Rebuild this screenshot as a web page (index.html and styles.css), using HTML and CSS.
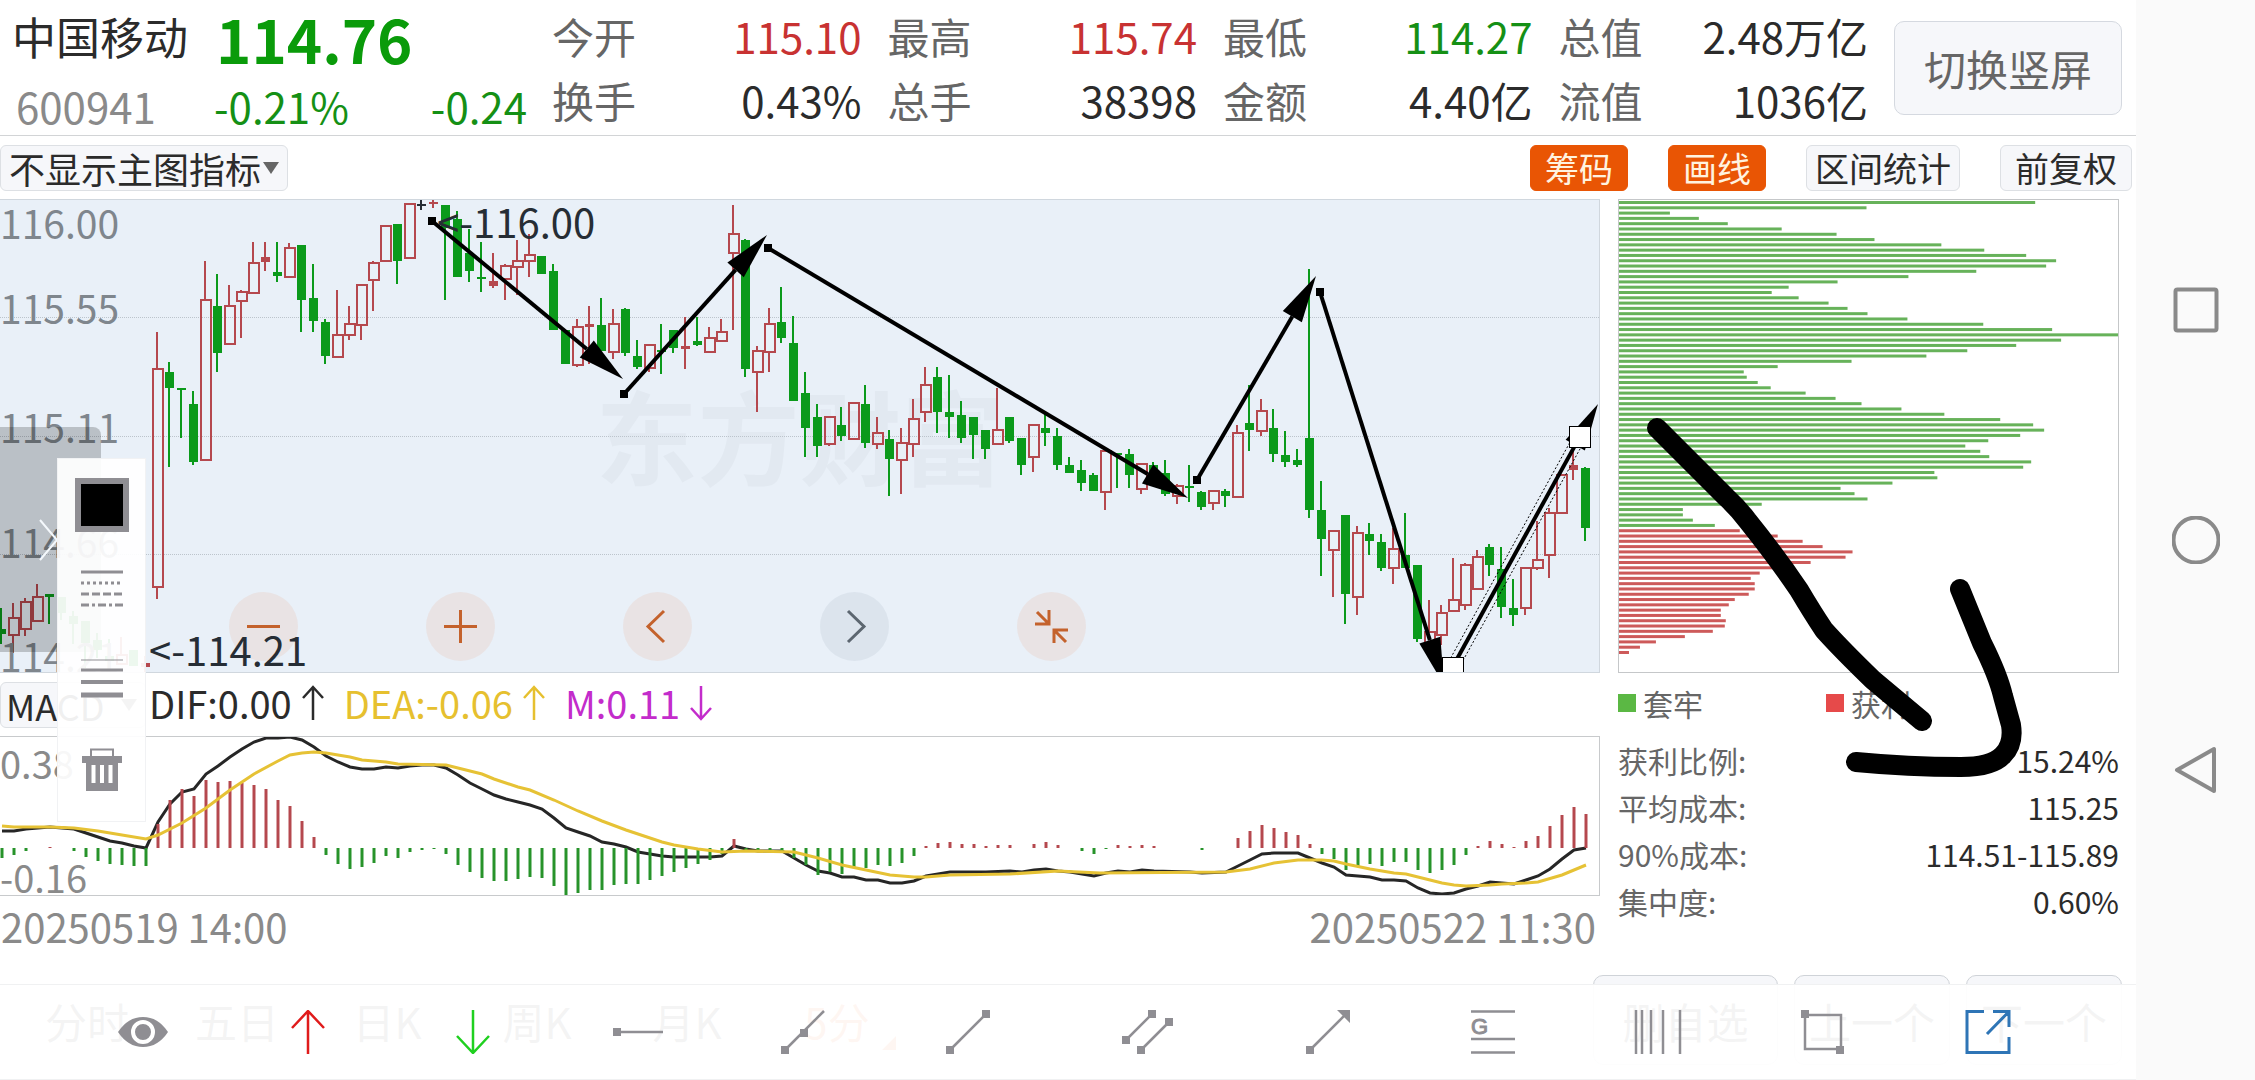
FILE: index.html
```
<!DOCTYPE html>
<html lang="zh-CN">
<head>
  <meta charset="UTF-8">
  <meta name="viewport" content="width=device-width, initial-scale=1.0">
  <title>中国移动 600941</title>
  <link rel="stylesheet" href="styles.css">
</head>
<body>
  <main class="app">
    <!-- Quote header -->
    <header class="quote">
      <div class="stock">
        <div class="stock-row">
          <h1 class="stock-name">中国移动</h1>
          <span class="price">114.76</span>
        </div>
        <div class="stock-row second">
          <span class="code">600941</span>
          <span class="change">-0.21%</span>
          <span class="change diff">-0.24</span>
        </div>
      </div>
      <dl class="stats">
        <div class="stat"><dt>今开</dt><dd class="up">115.10</dd></div>
        <div class="stat"><dt>最高</dt><dd class="up">115.74</dd></div>
        <div class="stat"><dt>最低</dt><dd class="down">114.27</dd></div>
        <div class="stat"><dt>总值</dt><dd>2.48万亿</dd></div>
        <div class="stat"><dt>换手</dt><dd>0.43%</dd></div>
        <div class="stat"><dt>总手</dt><dd>38398</dd></div>
        <div class="stat"><dt>金额</dt><dd>4.40亿</dd></div>
        <div class="stat"><dt>流值</dt><dd>1036亿</dd></div>
      </dl>
      <button class="rotate-btn" type="button">切换竖屏</button>
    </header>

    <!-- Indicator bar -->
    <div class="options">
      <div class="picker">
        <select class="picker-select main-select" aria-label="主图指标">
          <option>不显示主图指标</option>
        </select>
      </div>
      <div class="option-btns">
        <button class="option active" type="button">筹码</button>
        <button class="option active" type="button">画线</button>
        <button class="option" type="button">区间统计</button>
        <button class="option" type="button">前复权</button>
      </div>
    </div>

    <div class="content">
      <section class="charts">
        <div class="kline">
          <div class="watermark">东方财富</div>
          <svg class="plot" id="kline" viewBox="0 0 1599 472" preserveAspectRatio="none"></svg>
          <div class="axis">
            <div class="axis-cell"><span>116.00</span><span>115.55</span></div>
            <div class="axis-cell"><span>115.11</span></div>
            <div class="axis-cell"><span>114.66</span></div>
            <div class="axis-cell"><span>114.21</span></div>
          </div>
          <div class="zoom-btns">
            <button class="round" type="button" aria-label="缩小"><svg viewBox="0 0 69 69"><path d="M18 34.500H51"/></svg></button>
            <button class="round" type="button" aria-label="放大"><svg viewBox="0 0 69 69"><path d="M18 34.500H51M34.500 18V51"/></svg></button>
            <button class="round" type="button" aria-label="左移"><svg viewBox="0 0 69 69"><path d="M41 19L25 34.500L41 50"/></svg></button>
            <button class="round off" type="button" aria-label="右移"><svg viewBox="0 0 69 69"><path d="M28 19L44 34.500L28 50"/></svg></button>
            <button class="round" type="button" aria-label="收起"><svg viewBox="0 0 69 69"><path d="M20 20L31 31M18 32H32V18M49 50L38 39M51 38H37V51"/></svg></button>
          </div>
          <span class="mark mark-high">&lt;-116.00</span>
          <span class="mark mark-low">&lt;-114.21</span>
          <button class="drawer" type="button" aria-label="展开"><svg viewBox="0 0 20 42"><path d="M1 1L18 21L1 41"/></svg></button>
        </div>

        <div class="macd-head">
          <div class="picker">
            <select class="picker-select macd-select" aria-label="副图指标">
              <option>MACD</option>
            </select>
          </div>
          <span class="dif">DIF:0.00<svg class="trend" viewBox="0 0 22 36"><path d="M11 35V2M1 13L11 2L21 13"/></svg></span>
          <span class="dea">DEA:-0.06<svg class="trend" viewBox="0 0 22 36"><path d="M11 35V2M1 13L11 2L21 13"/></svg></span>
          <span class="m">M:0.11<svg class="trend" viewBox="0 0 22 36"><path d="M11 1V34M1 23L11 34L21 23"/></svg></span>
        </div>
        <div class="macd">
          <svg class="plot" id="macd" viewBox="0 0 1599 158" preserveAspectRatio="none"></svg>
          <div class="macd-axis"><span>0.38</span><span>-0.16</span></div>
        </div>
        <div class="dates"><span>20250519 14:00</span><span>20250522 11:30</span></div>

        <!-- Line style palette -->
        <div class="palette">
          <button class="swatch" type="button" aria-label="颜色"></button>
          <button class="tool dash" type="button" aria-label="线型">
            <svg viewBox="0 0 42 38"><path d="M0 2H42"/><path d="M0 13H42" stroke-dasharray="3 3"/><path d="M0 24H42" stroke-dasharray="8 3"/><path d="M0 35H42" stroke-dasharray="8 3 3 3"/></svg>
          </button>
          <button class="tool weight" type="button" aria-label="线宽">
            <svg viewBox="0 0 42 40"><path d="M0 2H42" stroke-width="1"/><path d="M0 12H42" stroke-width="3"/><path d="M0 24H42" stroke-width="4"/><path d="M0 37H42" stroke-width="5"/></svg>
          </button>
          <button class="tool trash" type="button" aria-label="删除">
            <svg viewBox="0 0 42 44"><path d="M10 8V1.500H32V8" fill="none" stroke-width="2"/><path d="M1 8H41V15H37V43H5V15H1Z" fill="#8f8e93" stroke="none"/><path d="M12.500 17V35M21 17V35M29.500 17V35" stroke="#fff" stroke-width="4"/></svg>
          </button>
        </div>
      </section>

      <aside class="chips">
        <div class="chip-box">
          <svg class="plot" id="chips" viewBox="0 0 500 472" preserveAspectRatio="none"></svg>
        </div>
        <div class="legend">
          <span class="trapped">套牢</span>
          <span class="profit">获利</span>
        </div>
        <dl class="chip-info">
          <div><dt>获利比例:</dt><dd>15.24%</dd></div>
          <div><dt>平均成本:</dt><dd>115.25</dd></div>
          <div><dt>90%成本:</dt><dd>114.51-115.89</dd></div>
          <div><dt>集中度:</dt><dd>0.60%</dd></div>
        </dl>
        <svg class="scribble" viewBox="0 0 500 600">
          <path d="M39 229L108 298Q120 309 129 321Q158 357 181 391Q194 413 206 431Q224 451 255 481L304 522"/>
          <path d="M342 390L364 444Q380 476 385 497L393 526Q396 545 385 556Q374 568 343 568Q290 568 238 563"/>
        </svg>
      </aside>
    </div>

    <!-- Period tabs -->
    <footer class="periods">
      <nav class="tabs">
        <button type="button">分时</button>
        <button type="button">五日</button>
        <button type="button">日K</button>
        <button type="button">周K</button>
        <button type="button">月K</button>
        <button class="current" type="button">5分</button>
      </nav>
      <div class="pager">
        <button class="pager-wide" type="button">删自选</button>
        <button type="button">上一个</button>
        <button type="button">下一个</button>
      </div>
    </footer>

    <!-- Drawing tools -->
    <div class="drawbar">
      <button type="button" aria-label="显示"><svg viewBox="0 0 50 44"><path d="M0 22Q10 7 25 7T50 22Q40 37 25 37T0 22Z" fill="#8f8e93" stroke="none"/><circle cx="25" cy="22" r="10" fill="#8f8e93" stroke="#fff" stroke-width="4"/></svg></button>
      <button type="button" aria-label="向上"><svg class="red" viewBox="0 0 50 44"><path d="M25 44V2M9 18L25 1L41 18"/></svg></button>
      <button type="button" aria-label="向下"><svg class="green" viewBox="0 0 50 44"><path d="M25 0V42M9 26L25 43L41 26"/></svg></button>
      <button type="button" aria-label="水平线"><svg viewBox="0 0 50 44"><path d="M0 22H50"/><path class="dot" d="M0 18h8v8h-8z"/></svg></button>
      <button type="button" aria-label="射线"><svg viewBox="0 0 50 44"><path d="M7 40L46 1"/><path class="dot" d="M3 36h8v8h-8zM22 19h8v8h-8z"/></svg></button>
      <button type="button" aria-label="线段"><svg viewBox="0 0 50 44"><path d="M7 40L43 4"/><path class="dot" d="M3 36h8v8h-8zM39 0h8v8h-8z"/></svg></button>
      <button class="wide" type="button" aria-label="平行线"><svg viewBox="0 0 52 44"><path d="M4 30L30 4M19 40L47 12"/><path class="dot" d="M0 26h8v8h-8zM26 0h8v8h-8zM15 36h8v8h-8zM43 8h8v8h-8z"/></svg></button>
      <button type="button" aria-label="箭头"><svg viewBox="0 0 50 44"><path d="M7 40L43 4"/><path class="dot" d="M3 36h8v8h-8zM34 0H47V13Z"/></svg></button>
      <button type="button" aria-label="黄金分割"><svg viewBox="0 0 50 44"><path d="M3 1.500H47M3 29H47M3 42.500H47"/><text x="3" y="24" class="golden">G</text></svg></button>
      <button type="button" aria-label="周期线"><svg viewBox="0 0 50 44"><path d="M3 0V44M9 0V44M18 0V44M30 0V44M47 0V44"/></svg></button>
      <button type="button" aria-label="矩形"><svg viewBox="0 0 50 44"><path d="M7 5H43V39H7Z"/><path class="dot" d="M3 0h8v8h-8zM38 36h8v8h-8z"/></svg></button>
      <button type="button" aria-label="退出画线"><svg class="blue" viewBox="0 0 50 44"><path d="M21 1.500H4V42.500H46V27M30 1.500H46V17M46 1.500L24 24"/></svg></button>
    </div>
  </main>

  <nav class="system-nav">
    <button type="button" aria-label="最近任务"><svg viewBox="0 0 48 48"><rect x="3.500" y="3.500" width="41" height="41" rx="2"/></svg></button>
    <button type="button" aria-label="主页"><svg viewBox="0 0 48 48"><circle cx="24" cy="24" r="22.500"/></svg></button>
    <button type="button" aria-label="返回"><svg viewBox="0 0 48 48"><path d="M5 24L42 3V45Z" stroke-linejoin="round"/></svg></button>
  </nav>

  <script src="chart.js"></script>
</body>
</html>
```

FILE: styles.css
```
* {
  margin: 0;
  padding: 0;
  box-sizing: border-box;
}

body {
  display: flex;
  min-height: 100vh;
  background-color: #fff;
  color: #2b2b2b;
  font-family: "Noto Sans CJK SC", "Noto Sans", sans-serif;
  font-size: 42px;
  overflow: hidden;
}

button,
select {
  font: inherit;
  color: inherit;
  border: none;
  background: none;
  cursor: pointer;
}

svg {
  display: block;
  fill: none;
}

.app {
  position: relative;
  flex: 1;
  min-width: 0;
  height: 100vh;
  overflow: hidden;
}

/* Quote header */
.quote {
  display: flex;
  align-items: center;
  height: 136px;
  padding-right: 14px;
  border-bottom: 1px solid #d2d4d6;
}

.stock {
  align-self: flex-start;
  width: 552px;
  padding: 4px 0 0 12px;
}

.stock-row {
  display: flex;
  align-items: center;
  height: 64px;
}

.stock-row.second {
  height: 74px;
}

.stock-name {
  font-size: 44px;
  font-weight: 400;
}

.price {
  margin-left: 28px;
  padding-top: 4px;
  font-size: 60px;
  font-weight: 700;
  line-height: 64px;
  color: #0a9b0a;
}

.code {
  width: 202px;
  padding-left: 4px;
  color: #8a8a8a;
}

.change {
  color: #159015;
}

.diff {
  margin-left: auto;
  margin-right: 25px;
}

.stats {
  display: grid;
  flex: 1;
  grid-template-columns: repeat(4, 1fr);
  column-gap: 26px;
}

.stat {
  display: flex;
  justify-content: space-between;
  line-height: 64px;
}

.stat dt {
  color: #666;
}

.up {
  color: #c83232;
}

.down {
  color: #159015;
}

.rotate-btn {
  width: 228px;
  height: 94px;
  margin-left: 26px;
  color: #666;
  background-color: #f6f7fa;
  border: 1px solid #d5d9e0;
  border-radius: 10px;
}

/* Indicator bar */
.options {
  display: flex;
  align-items: center;
  justify-content: space-between;
  height: 63px;
  padding-right: 4px;
}

.picker {
  position: relative;
}

.picker::after {
  content: "";
  position: absolute;
  top: 17px;
  right: 9px;
  border: 8px solid transparent;
  border-top: 12px solid #666;
  border-bottom: none;
  pointer-events: none;
}

.picker-select {
  display: block;
  height: 46px;
  padding-left: 8px;
  appearance: none;
  font-size: 36px;
  line-height: 44px;
  background-color: #f6f7fa;
  border: 1px solid #dde0e4;
  border-radius: 6px;
}

.main-select {
  width: 288px;
}

.macd-select {
  width: 146px;
  padding-left: 5px;
}

.option-btns {
  display: flex;
  gap: 40px;
}

.option {
  height: 46px;
  padding: 0 14px;
  font-size: 34px;
  line-height: 42px;
  background-color: #f6f7fa;
  border: 1px solid #dde0e4;
  border-radius: 6px;
}

.option:nth-child(3) {
  padding: 0 8px;
}

.option.active {
  color: #fff3e0;
  background-color: #e95504;
  border-color: #e95504;
}

/* Main area */
.content {
  display: flex;
  gap: 18px;
  padding-right: 17px;
}

.charts {
  position: relative;
  flex: 1;
  min-width: 0;
}

.kline {
  position: relative;
  height: 474px;
  background-color: #e9f0f8;
  border: 1px solid #d0d7de;
  border-left: none;
  overflow: hidden;
}

.plot {
  position: absolute;
  top: 0;
  left: 0;
  width: 100%;
  height: 100%;
}

.watermark {
  position: absolute;
  top: 174px;
  width: 100%;
  text-align: center;
  font-size: 102px;
  font-weight: 700;
  line-height: 120px;
  color: #e2e9f1;
}

.axis {
  position: absolute;
  top: 0;
  left: 0;
  display: flex;
  flex-direction: column;
  height: 100%;
  font-size: 39px;
  line-height: 26px;
  color: #7f868d;
}

.axis-cell {
  display: flex;
  flex: 1;
  flex-direction: column;
  justify-content: flex-end;
  padding-bottom: 4px;
}

.axis-cell:first-child {
  justify-content: space-between;
  padding: 9px 0;
}

.zoom-btns {
  position: absolute;
  top: 392px;
  left: 229px;
  display: flex;
  gap: 128px;
}

.round {
  width: 69px;
  height: 69px;
  border-radius: 50%;
  background-color: rgba(233, 120, 60, 0.1);
}

.round svg {
  stroke: #c4622c;
  stroke-width: 3;
}

.round.off {
  background-color: rgba(90, 110, 130, 0.09);
}

.round.off svg {
  stroke: #5c6670;
}

.mark {
  position: absolute;
  font-size: 40px;
  line-height: 40px;
  color: #262d35;
}

.mark-high {
  top: 1px;
  left: 437px;
}

.mark-low {
  top: 429px;
  left: 149px;
}

.drawer {
  position: absolute;
  top: 227px;
  left: 0;
  width: 101px;
  height: 225px;
  padding-left: 39px;
  background-color: rgba(0, 0, 0, 0.2);
  border-radius: 0 8px 8px 0;
}

.drawer svg {
  width: 20px;
  height: 42px;
  stroke: #f4f8fc;
  stroke-width: 2;
}

/* MACD */
.macd-head {
  display: flex;
  align-items: center;
  gap: 20px;
  height: 63px;
  font-size: 38px;
  line-height: 44px;
}

.macd-head .picker {
  margin-right: -17px;
}

.macd-head span {
  display: flex;
  align-items: center;
  gap: 10px;
  padding-bottom: 4px;
}

.trend {
  width: 22px;
  height: 36px;
  stroke: currentColor;
  stroke-width: 2.5;
}

.dea {
  color: #e6c02f;
}

.m {
  color: #c32ccb;
}

.macd {
  position: relative;
  height: 160px;
  border: 1px solid #c8cacc;
  border-left: none;
}

.macd-axis {
  position: absolute;
  display: flex;
  flex-direction: column;
  justify-content: space-between;
  height: 100%;
  padding-top: 8px;
  font-size: 38px;
  line-height: 36px;
  color: #8a8a8a;
}

.dates {
  display: flex;
  justify-content: space-between;
  padding: 6px 4px 0 1px;
  font-size: 40px;
  line-height: 48px;
  color: #8a8a8a;
}

.palette {
  position: absolute;
  top: 259px;
  left: 57px;
  display: flex;
  flex-direction: column;
  align-items: center;
  width: 89px;
  height: 364px;
  padding-top: 19px;
  background-color: rgba(255, 255, 255, 0.93);
  border: 1px solid #f1f2f4;
}

.swatch {
  width: 54px;
  height: 54px;
  background-color: #000;
  border: 6px solid #8f8e93;
}

.tool svg {
  width: 42px;
  stroke: #8f8e93;
  stroke-width: 3;
}

.dash {
  margin-top: 38px;
}

.weight {
  margin-top: 50px;
}

.trash {
  margin-top: 50px;
}

/* Chip distribution */
.chips {
  position: relative;
  width: 501px;
}

.chip-box {
  position: relative;
  height: 474px;
  border: 1px solid #c5c7c9;
}

.legend {
  display: flex;
  height: 59px;
  font-size: 30px;
  line-height: 58px;
  color: #666;
}

.legend span {
  display: flex;
  align-items: center;
  gap: 7px;
  width: 208px;
}

.legend span::before {
  content: "";
  width: 18px;
  height: 18px;
  background-color: #5bb844;
}

.legend .profit::before {
  background-color: #e64a4a;
}

.chip-info {
  padding-top: 5px;
  font-size: 30px;
  line-height: 47px;
}

.chip-info div {
  display: flex;
  justify-content: space-between;
}

.chip-info dt {
  color: #666;
}

.scribble {
  position: absolute;
  top: 0;
  left: 0;
  width: 500px;
  height: 600px;
  stroke: #000;
  stroke-width: 20;
  stroke-linecap: round;
  stroke-linejoin: round;
}

/* Period tabs */
.periods {
  position: absolute;
  right: 14px;
  bottom: 15px;
  left: 42px;
  display: flex;
  justify-content: space-between;
}

.tabs {
  display: flex;
  gap: 60px;
}

.tabs button {
  position: relative;
  width: 90px;
}

.tabs .current {
  color: #e95504;
}

.tabs .current::after {
  content: "";
  position: absolute;
  right: -14px;
  bottom: 15px;
  border-left: 14px solid transparent;
  border-bottom: 14px solid #e95504;
}

.pager {
  display: flex;
  gap: 16px;
}

.pager button {
  width: 156px;
  height: 90px;
  background-color: #f6f7fa;
  border: 1px solid #cfd3d8;
  border-radius: 10px;
}

.pager .pager-wide {
  width: 185px;
}

/* Drawing tools */
.drawbar {
  position: absolute;
  right: 0;
  bottom: 0;
  left: 0;
  display: flex;
  gap: 115px;
  height: 96px;
  padding-left: 118px;
  align-items: center;
  background-color: rgba(255, 255, 255, 0.95);
  border-top: 1px solid #f0f1f2;
  border-bottom: 1px solid #f0f1f2;
}

.drawbar button {
  display: flex;
  justify-content: center;
  width: 50px;
}

.drawbar .wide {
  width: 80px;
}

.drawbar svg {
  height: 44px;
  stroke: #8f8e93;
  stroke-width: 2.5;
}

.drawbar .dot {
  fill: #8f8e93;
  stroke: none;
}

.drawbar .red {
  stroke: #e01b1b;
}

.drawbar .green {
  stroke: #1fd01f;
}

.drawbar .blue {
  stroke: #2e75b6;
  stroke-width: 3;
}

.golden {
  font-family: "Liberation Sans", sans-serif;
  font-size: 22px;
  fill: #8f8e93;
  stroke: #8f8e93;
  stroke-width: 1;
}

/* System navigation */
.system-nav {
  display: flex;
  flex-direction: column;
  align-items: center;
  justify-content: center;
  gap: 182px;
  width: 119px;
  background-color: #fafafa;
}

.system-nav svg {
  width: 48px;
  height: 48px;
  stroke: #8a8a8a;
  stroke-width: 4;
}
```

FILE: chart.js
```
const RED = '#b5484e';
const GREEN = '#0b9a1b';
const STEP = 12;

// color, high, body top, body bottom, low
const candles = [
  ['g', 408, 429, 434, 444], ['r', 403, 418, 435, 453], ['r', 398, 402, 429, 436], ['r', 384, 397, 421, 421],
  ['g', 394, 394, 397, 424], ['g', 397, 397, 413, 420], ['g', 411, 416, 424, 444], ['g', 421, 421, 443, 468],
  ['g', 433, 440, 450, 458], ['g', 439, 456, 461, 468], ['r', 437, 455, 464, 464], ['g', 450, 450, 466, 466],
  ['r', 456, 463, 467, 473], ['r', 132, 169, 387, 399], ['g', 162, 172, 188, 267], ['g', 188, 188, 190, 238],
  ['g', 191, 204, 262, 265], ['r', 61, 100, 260, 260], ['g', 74, 106, 153, 172], ['r', 85, 106, 144, 145],
  ['r', 90, 92, 101, 138], ['r', 42, 63, 93, 93], ['r', 42, 57, 62, 71], ['g', 42, 72, 76, 82],
  ['r', 43, 48, 77, 77], ['g', 45, 45, 100, 132], ['g', 64, 98, 121, 132], ['g', 119, 122, 156, 164],
  ['r', 90, 135, 157, 158], ['r', 106, 124, 135, 140], ['r', 84, 85, 125, 140], ['r', 61, 63, 80, 111],
  ['r', 26, 26, 61, 61], ['g', 24, 24, 61, 84], ['r', 3, 4, 58, 58], ['k', 0, 4, 6, 10],
  ['r', 0, 2, 4, 8], ['g', 5, 5, 28, 100], ['g', 11, 19, 77, 77], ['g', 29, 53, 71, 82],
  ['g', 42, 77, 79, 92], ['r', 53, 81, 86, 88], ['r', 64, 66, 79, 100], ['r', 40, 61, 67, 95],
  ['r', 34, 55, 61, 77], ['g', 56, 56, 74, 74], ['g', 64, 71, 130, 130], ['g', 130, 130, 164, 164],
  ['r', 119, 127, 165, 167], ['r', 106, 124, 127, 164], ['g', 98, 125, 151, 151], ['r', 109, 124, 152, 159],
  ['g', 108, 109, 153, 156], ['g', 140, 156, 167, 169], ['r', 144, 145, 168, 172], ['g', 124, 150, 152, 174],
  ['g', 130, 130, 148, 153], ['r', 117, 146, 149, 169], ['g', 117, 141, 145, 146], ['r', 127, 138, 152, 152],
  ['r', 119, 132, 141, 141], ['r', 5, 34, 53, 130], ['g', 39, 40, 169, 177], ['r', 146, 151, 172, 212],
  ['r', 108, 124, 152, 172], ['g', 87, 122, 138, 143], ['g', 116, 143, 201, 201], ['g', 172, 193, 228, 257],
  ['g', 204, 217, 246, 257], ['r', 216, 217, 244, 246], ['g', 207, 225, 236, 241], ['r', 203, 203, 239, 240],
  ['g', 185, 204, 243, 248], ['r', 217, 233, 244, 249], ['g', 230, 239, 259, 296], ['r', 228, 243, 260, 294],
  ['r', 199, 219, 244, 257], ['r', 167, 185, 212, 222], ['g', 167, 177, 212, 233], ['g', 175, 212, 217, 238],
  ['g', 201, 215, 238, 243], ['g', 217, 217, 235, 259], ['g', 230, 230, 249, 259], ['r', 188, 230, 244, 244],
  ['g', 217, 217, 241, 243], ['g', 238, 238, 265, 275], ['r', 224, 225, 257, 272], ['g', 214, 228, 233, 246],
  ['g', 228, 236, 265, 270], ['g', 257, 265, 273, 273], ['g', 260, 270, 283, 291], ['g', 273, 275, 291, 291],
  ['r', 251, 251, 292, 310], ['g', 253, 253, 255, 288], ['g', 249, 254, 275, 288], ['r', 264, 264, 289, 294],
  ['g', 262, 265, 275, 275], ['g', 260, 273, 294, 296], ['r', 284, 286, 296, 304], ['g', 265, 286, 288, 302],
  ['g', 291, 292, 307, 310], ['r', 290, 291, 303, 310], ['g', 289, 291, 296, 307], ['r', 225, 233, 297, 297],
  ['g', 185, 223, 230, 251], ['r', 199, 211, 231, 236], ['g', 209, 228, 254, 262], ['g', 231, 255, 262, 267],
  ['g', 249, 260, 265, 267], ['g', 69, 238, 310, 318], ['g', 281, 310, 339, 376], ['r', 330, 331, 350, 397],
  ['g', 315, 315, 394, 424], ['r', 326, 333, 397, 415], ['g', 323, 334, 341, 355], ['g', 334, 342, 368, 371],
  ['r', 328, 349, 368, 384], ['g', 313, 355, 368, 368], ['g', 365, 365, 439, 442], ['r', 400, 432, 446, 448],
  ['r', 405, 413, 435, 445], ['r', 358, 400, 411, 411], ['r', 363, 365, 405, 410], ['r', 350, 357, 389, 389],
  ['g', 344, 347, 365, 376], ['g', 347, 369, 407, 418], ['g', 379, 408, 415, 426], ['r', 367, 368, 408, 415],
  ['r', 321, 360, 368, 370], ['r', 308, 313, 355, 378], ['r', 274, 275, 313, 313], ['r', 251, 265, 270, 280],
  ['g', 267, 268, 328, 341]
];

// Trend lines drawn by the user: x1, y1, x2, y2
const arrows = [
  [432, 21, 623, 179], [624, 194, 767, 35], [768, 48, 1188, 298],
  [1197, 280, 1316, 76], [1320, 92, 1444, 485], [1452, 468, 1598, 204]
];

const bars = [
  -10, -7, -3, 0, 1, 0, -3, -9, -13, -16, -17, -18, -18, 24, 48, 59, 52, 68, 66, 67, 65, 63, 59, 48, 42, 27, 11,
  -7, -16, -21, -19, -15, -8, -10, -4, -2, -1, -6, -17, -24, -30, -33, -33, -31, -29, -30, -38, -47, -45, -42,
  -42, -37, -36, -36, -32, -28, -24, -20, -16, -12, -6, 9, -2, -3, -2, -5, -10, -17, -27, -24, -26, -20, -20,
  -17, -18, -15, -8, 2, 5, 6, 4, 4, 2, 3, 3, 0, 4, 6, 3, 0, -3, -6, -1, 3, 2, 3, 2, 0, 0, 0, -2, 0, 0, 10, 17,
  23, 20, 16, 13, 4, -6, -11, -22, -19, -16, -18, -14, -14, -22, -25, -22, -17, -7, 2, 7, 4, 1, 7, 12, 22, 33, 41, 34
];

const dif = '2,94 14,94 26,92 50,90 74,92 86,96 98,100 110,104 122,106 134,109 146,111 158,85 170,67 182,55 194,52 206,37 218,29 230,20 242,12 254,5 266,1 278,1 290,0 302,3 314,10 326,19 338,25 350,30 362,32 374,32 386,30 398,31 410,29 422,28 434,28 446,31 458,38 470,46 482,52 494,58 506,62 518,65 530,68 542,72 554,81 566,91 578,95 590,99 602,105 614,107 626,110 638,115 650,117 662,119 674,120 710,120 722,119 734,109 746,112 758,114 782,114 794,121 806,128 818,134 830,136 842,140 854,140 866,143 878,143 890,146 902,146 914,144 926,139 938,137 950,135 986,135 1010,134 1022,135 1034,133 1046,132 1058,134 1070,135 1082,137 1094,139 1106,136 1118,134 1130,135 1142,133 1154,134 1190,135 1202,136 1226,135 1238,129 1250,123 1262,117 1274,116 1298,116 1310,121 1322,126 1334,130 1346,138 1358,139 1370,140 1382,143 1394,143 1406,144 1418,151 1430,156 1442,157 1454,156 1466,152 1478,149 1490,145 1514,147 1526,143 1538,139 1550,132 1562,122 1574,113 1586,111';
const dea = '2,89 14,90 50,90 74,91 98,94 122,98 146,102 158,98 182,86 206,71 230,53 254,37 278,24 290,18 302,16 314,15 326,16 350,20 362,23 386,25 398,27 446,28 482,37 494,42 518,50 530,53 554,63 578,74 602,84 626,93 650,101 662,105 674,108 698,112 722,115 746,114 794,115 806,118 818,121 842,128 866,133 890,138 914,140 926,140 950,138 1010,137 1058,134 1100,136 1226,135 1250,132 1274,126 1298,123 1322,123 1334,124 1346,127 1370,132 1394,136 1406,137 1430,143 1442,146 1454,148 1466,149 1490,148 1502,147 1526,146 1538,145 1562,138 1586,128';

// Chip distribution, top price first
const trapped = [
  417, 248, 51, 80, 109, 163, 218, 256, 323, 366, 408, 438, 428, 358, 290, 219, 170, 153, 180, 210,
  229, 249, 289, 365, 434, 500, 443, 398, 349, 308, 233, 159, 125, 128, 139, 152, 187, 217, 243, 283,
  326, 382, 415, 426, 402, 370, 347, 362, 371, 413, 405, 316, 319, 274, 222, 236, 249, 143, 64, 64, 74, 96
];
const profit = [
  121, 159, 184, 204, 234, 227, 192, 158, 141, 132, 136, 136, 130, 116, 110, 102, 102, 107, 106, 94, 66, 37, 21, 10
];

function drawKline() {
  let out = '';
  [117, 236, 354].forEach(y => {
    out += `<path d="M0 ${y}.5H1600" stroke="#bcc4cc" stroke-dasharray="1 1"/>`;
  });

  candles.forEach(([type, high, top, bottom, low], i) => {
    const x = 1 + i * STEP;
    const color = type === 'g' ? GREEN : type === 'r' ? RED : '#262d35';
    out += `<path d="M${x} ${high}V${top}M${x} ${bottom}V${low}" stroke="${color}" stroke-width="2"/>`;
    if (type === 'r' && bottom - top > 5) {
      out += `<rect x="${x - 4}" y="${top}" width="10" height="${bottom - top}" fill="none" stroke="${color}" stroke-width="2"/>`;
    } else {
      out += `<rect x="${x - 4}" y="${top}" width="9" height="${Math.max(bottom - top, 2)}" fill="${color}"/>`;
    }
    if (bottom - top <= 5) {
      out += `<path d="M${x} ${high}V${low}" stroke="${color}" stroke-width="2"/>`;
    }
  });

  arrows.forEach(([x1, y1, x2, y2], i) => {
    const len = Math.hypot(x2 - x1, y2 - y1);
    const ux = (x2 - x1) / len;
    const uy = (y2 - y1) / len;
    const bx = x2 - ux * 47;
    const by = y2 - uy * 47;
    out += `<path d="M${x1} ${y1}L${bx} ${by}" stroke="#000" stroke-width="4"/>`;
    out += `<path d="M${x2} ${y2}L${bx - uy * 11} ${by + ux * 11}L${bx + uy * 11} ${by - ux * 11}Z" fill="#000"/>`;
    if (i < arrows.length - 1) {
      out += `<rect x="${x1 - 4}" y="${y1 - 4}" width="8" height="8" fill="#000"/>`;
      return;
    }
    // Selected line: dotted outline and two handles
    [-6, 6].forEach(d => {
      out += `<path d="M${x1 - uy * d} ${y1 + ux * d}L${bx - uy * d} ${by + ux * d}" stroke="#000" stroke-dasharray="2 2"/>`;
    });
    out += '<rect x="1442.500" y="457.500" width="21" height="21" fill="#fff" stroke="#000"/>';
    out += '<rect x="1569.500" y="226.500" width="21" height="21" fill="#fff" stroke="#000"/>';
  });
  document.getElementById('kline').innerHTML = out;
}

function drawMacd() {
  let out = `<polyline points="${dif}" stroke="#262626" stroke-width="3"/>`;
  bars.forEach((v, i) => {
    if (!v) return;
    out += `<path d="M${2 + i * STEP} 111v${-v}" stroke="${v > 0 ? RED : '#27932a'}" stroke-width="3"/>`;
  });
  out += `<polyline points="${dea}" stroke="#e6c235" stroke-width="3"/>`;
  document.getElementById('macd').innerHTML = out;
}

function drawChips() {
  let out = '';
  trapped.concat(profit).forEach((w, i) => {
    const y = 1 + i * 5.294;
    out += `<rect x="0" y="${y}" width="${w}" height="3" fill="${i < trapped.length ? '#67b25a' : '#cd5a5a'}"/>`;
  });
  document.getElementById('chips').innerHTML = out;
}

drawKline();
drawMacd();
drawChips();
```
